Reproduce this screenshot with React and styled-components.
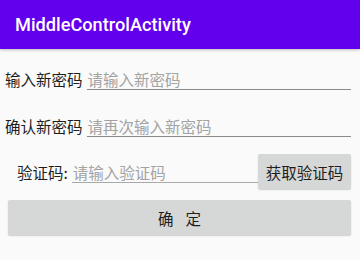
import React from "react";
import styled, { createGlobalStyle } from "styled-components";

const Global = createGlobalStyle`
  html, body { margin: 0; padding: 0; background: #fafafa; }
  body { width: 360px; height: 260px; overflow: hidden; font-family: "Noto Sans CJK SC", "Noto Sans", sans-serif; }
  * { box-sizing: border-box; }
`;

const Screen = styled.div`
  width: 360px;
  height: 260px;
  background: #fafafa;
  display: flex;
  flex-direction: column;
`;

const AppBar = styled.header`
  height: 49px;
  flex: none;
  background: #6200ee;
  display: flex;
  align-items: center;
  padding-left: 15px;
  box-shadow: 0 1px 3px rgba(0, 0, 0, 0.25);
  position: relative;
  z-index: 1;
`;

const Title = styled.h1`
  margin: 0;
  font-family: Roboto, "Liberation Sans", sans-serif;
  font-weight: 500;
  font-size: 18.2px;
  color: #ffffff;
  letter-spacing: 0;
`;

const Body = styled.div`
  display: flex;
  flex-direction: column;
  padding: 0 9px 0 5px;
`;

const Row = styled.div`
  display: flex;
  align-items: baseline;
  margin-top: ${(p) => p.$top}px;
`;

const CodeRow = styled.div`
  display: flex;
  align-items: center;
  margin-top: ${(p) => p.$top}px;
`;

const Field = styled.div`
  flex: 1;
  display: flex;
  align-items: baseline;
  padding-left: ${(p) => p.$indent || 0}px;
`;

const Label = styled.span`
  font-size: 15.5px;
  color: #1e1e1e;
  white-space: nowrap;
  margin-right: 4px;
`;

const Input = styled.input`
  flex: 1;
  min-width: 0;
  height: 21px;
  border: none;
  border-bottom: 1px solid ${(p) => p.$line || "#8a8a8a"};
  background: transparent;
  padding: 0 0 0 1px;
  margin: 0;
  outline: none;
  font-family: "Noto Sans CJK SC", sans-serif;
  font-size: 15.5px;
  color: #1e1e1e;
  &::placeholder { color: #a3a3a3; }
`;

const GrayButton = styled.button`
  flex: none;
  width: ${(p) => (p.$full ? "auto" : "93px")};
  height: 35px;
  border: none;
  border-radius: 2px;
  background: #d6d7d7;
  box-shadow: 0 1px 1.5px rgba(0, 0, 0, 0.18);
  font-family: "Noto Sans CJK SC", sans-serif;
  font-size: 15.5px;
  color: #1e1e1e;
  padding: 0;
  white-space: nowrap;
  margin-left: ${(p) => (p.$full ? "3px" : "0")};
  margin-top: ${(p) => p.$top || 0}px;
`;

const Gap = styled.span`
  display: inline-block;
  width: 12px;
`;

export default function App() {
  return (
    <>
      <Global />
      <Screen>
        <AppBar>
          <Title>MiddleControlActivity</Title>
        </AppBar>
        <Body>
          <Row $top={19}>
            <Label>输入新密码</Label>
            <Input placeholder="请输入新密码" />
          </Row>
          <Row $top={25}>
            <Label>确认新密码</Label>
            <Input placeholder="请再次输入新密码" />
          </Row>
          <CodeRow $top={17}>
            <Field $indent={12}>
              <Label>验证码:</Label>
              <Input $line="#a8a8a8" placeholder="请输入验证码" />
            </Field>
            <GrayButton>获取验证码</GrayButton>
          </CodeRow>
          <GrayButton $full $top={11}>
            确<Gap />定
          </GrayButton>
        </Body>
      </Screen>
    </>
  );
}
